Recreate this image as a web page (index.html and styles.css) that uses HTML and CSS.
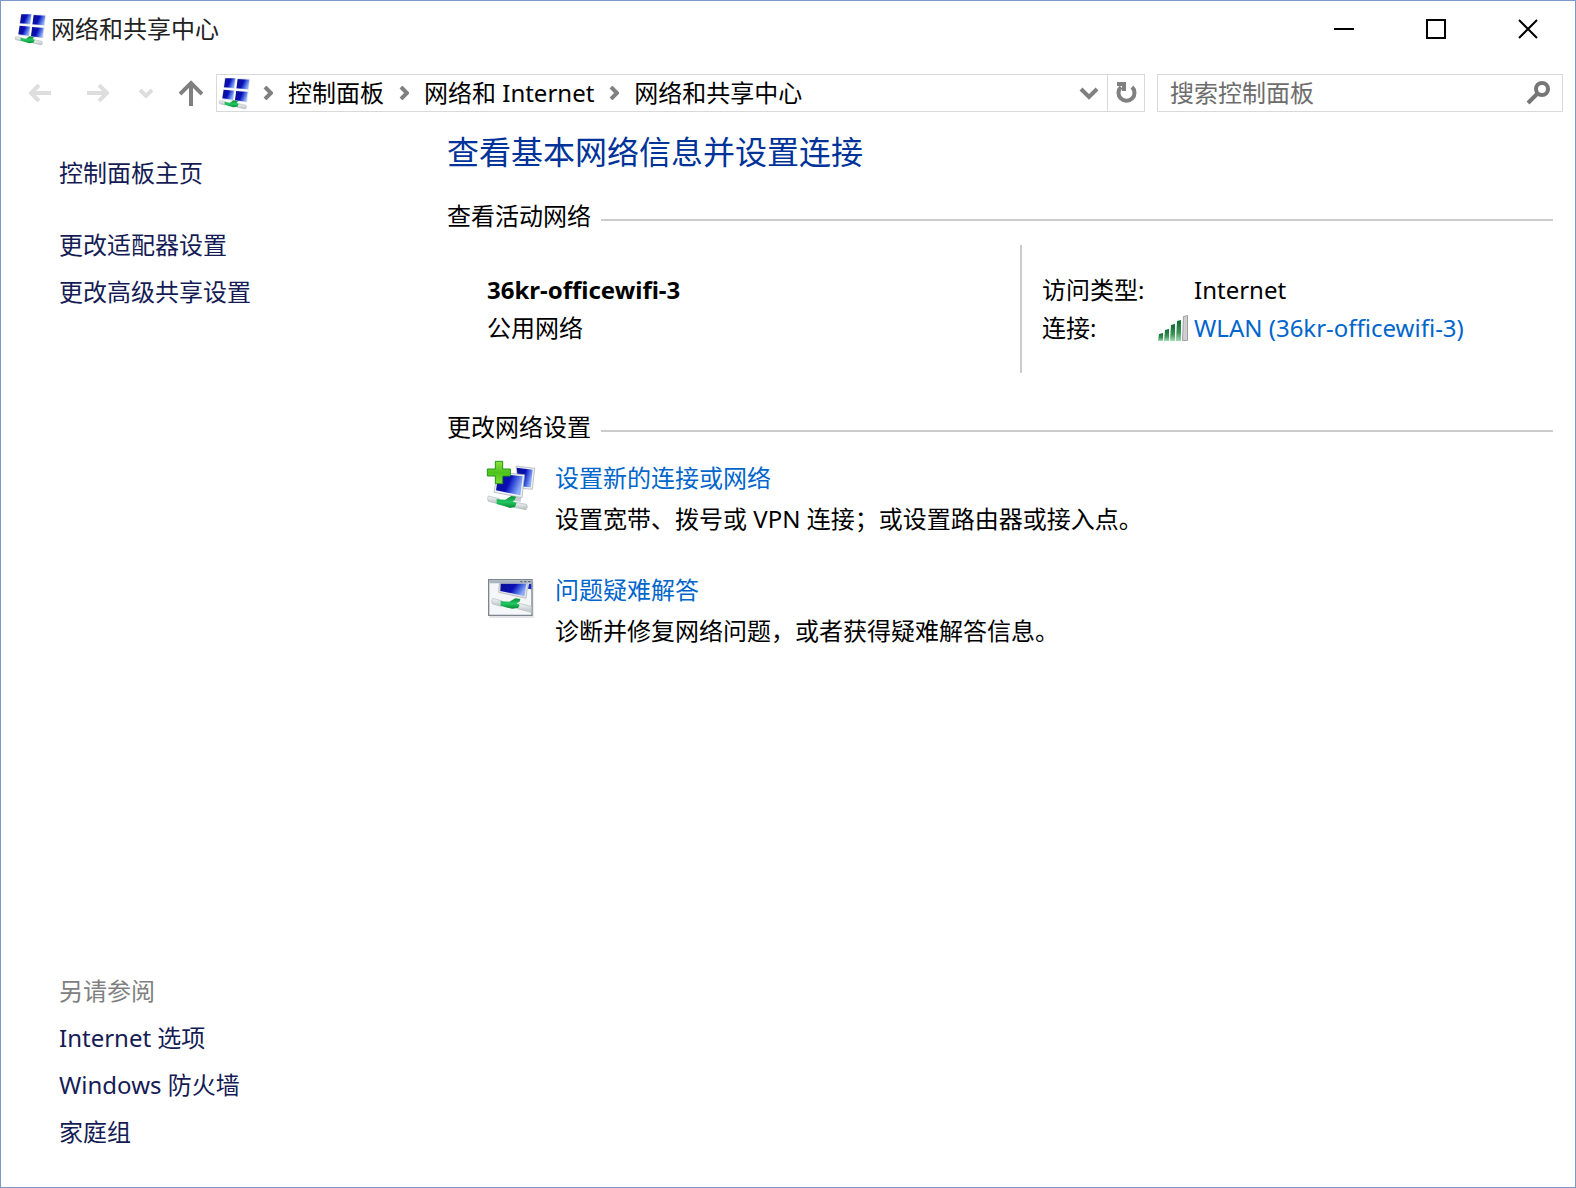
FILE: index.html
```html
<!DOCTYPE html>
<html lang="zh-CN">
<head>
    <meta charset="UTF-8">
    <meta name="viewport" content="width=device-width, initial-scale=1.0">
    <title>网络和共享中心</title>
    <link rel="stylesheet" href="styles.css">
</head>
<body>
    <!-- Shared icon shapes -->
    <svg class="sprite" aria-hidden="true">
        <defs>
            <linearGradient id="screen" x1="0" y1="0" x2="1" y2="0.35">
                <stop offset="0" stop-color="#0a1290"/>
                <stop offset="0.55" stop-color="#0a0eb4"/>
                <stop offset="0.7" stop-color="#2c46d4"/>
                <stop offset="1" stop-color="#8cacf8"/>
            </linearGradient>
            <linearGradient id="cable" x1="0" y1="0" x2="0" y2="1">
                <stop offset="0" stop-color="#f4f7f7"/>
                <stop offset="1" stop-color="#b9c1c3"/>
            </linearGradient>
            <linearGradient id="plug" x1="0" y1="0" x2="0" y2="1">
                <stop offset="0" stop-color="#0b8a34"/>
                <stop offset="0.5" stop-color="#22c860"/>
                <stop offset="1" stop-color="#078a36"/>
            </linearGradient>
            <linearGradient id="plus" x1="0" y1="0" x2="0" y2="1">
                <stop offset="0" stop-color="#8ee23c"/>
                <stop offset="0.5" stop-color="#4cc41c"/>
                <stop offset="1" stop-color="#7cdc34"/>
            </linearGradient>
            <linearGradient id="bar" x1="0" y1="0" x2="0" y2="1">
                <stop offset="0" stop-color="#0c6a30"/>
                <stop offset="0.6" stop-color="#3c9458"/>
                <stop offset="1" stop-color="#a4dcb4"/>
            </linearGradient>
            <symbol id="network" viewBox="0 0 96 99">
                <path fill="#e3e5e8" d="M19 3L96 5L88 76L12 68Z"/>
                <path fill="url(#screen)" d="M22 4L52 4L48 33L18 31Z"/>
                <path fill="url(#screen)" d="M59 6L94 8L90 37L55 34Z"/>
                <path fill="url(#screen)" d="M17 38L48 41L45 68L13 64Z"/>
                <path fill="url(#screen)" d="M54 42L89 45L85 74L51 70Z"/>
                <path fill="none" stroke="#fff" stroke-width="4" d="M56 3L48 71M15 35L92 41"/>
                <path fill="url(#cable)" stroke="#b4bcbe" stroke-width="2" d="M5 71L24 74L22 84L5 80Q1 75 5 71Z"/>
                <path fill="url(#cable)" stroke="#b4bcbe" stroke-width="2" d="M60 80L84 85Q87 91 82 96L57 90Z"/>
                <path fill="url(#plug)" d="M20 75L36 77L46 70L60 72L57 77L62 82L58 89L46 91L20 83Z"/>
            </symbol>
            <symbol id="crumb-arrow" viewBox="0 0 10 14">
                <path fill="none" stroke="#808080" stroke-width="4" d="M2 1L8 7L2 13"/>
            </symbol>
        </defs>
    </svg>

    <div class="window">
        <!-- Title bar -->
        <header class="title-bar">
            <svg class="network-icon" aria-hidden="true"><use href="#network"/></svg>
            <h1 class="window-title">网络和共享中心</h1>
            <div class="window-buttons">
                <button type="button" class="window-button" aria-label="最小化">
                    <svg width="20" height="20"><path d="M0 10H20"/></svg>
                </button>
                <button type="button" class="window-button" aria-label="最大化">
                    <svg width="20" height="20"><path d="M1 1H19V19H1Z"/></svg>
                </button>
                <button type="button" class="window-button" aria-label="关闭">
                    <svg width="20" height="20"><path d="M1 1L19 19M19 1L1 19"/></svg>
                </button>
            </div>
        </header>

        <!-- Navigation -->
        <div class="toolbar">
            <div class="history">
                <button type="button" class="nav-button faded" aria-label="后退">
                    <svg width="22" height="18"><path d="M22 9H2M10 1L2 9L10 17"/></svg>
                </button>
                <button type="button" class="nav-button faded" aria-label="前进">
                    <svg width="22" height="18"><path d="M0 9H20M12 1L20 9L12 17"/></svg>
                </button>
                <button type="button" class="nav-button recent faded" aria-label="最近的位置">
                    <svg width="14" height="10"><path d="M1 2L7 8L13 2"/></svg>
                </button>
                <button type="button" class="nav-button up" aria-label="向上">
                    <svg width="24" height="26"><path d="M12 26V3M1 14L12 3L23 14"/></svg>
                </button>
            </div>
            <div class="address">
                <svg class="network-icon" aria-hidden="true"><use href="#network"/></svg>
                <nav class="crumbs">
                    <svg class="crumb-arrow" aria-hidden="true"><use href="#crumb-arrow"/></svg>
                    <a href="#">控制面板</a>
                    <svg class="crumb-arrow" aria-hidden="true"><use href="#crumb-arrow"/></svg>
                    <a href="#">网络和 Internet</a>
                    <svg class="crumb-arrow" aria-hidden="true"><use href="#crumb-arrow"/></svg>
                    <a href="#">网络和共享中心</a>
                </nav>
                <button type="button" class="address-button" aria-label="以前的位置">
                    <svg width="20" height="14"><path d="M2 3L10 11L18 3"/></svg>
                </button>
                <button type="button" class="address-button refresh" aria-label="刷新">
                    <svg width="22" height="22"><path d="M17 5A8 8 0 1 1 6 5M2 2H9V9"/></svg>
                </button>
            </div>
            <form class="search">
                <input type="search" class="search-input" placeholder="搜索控制面板" aria-label="搜索控制面板">
                <button type="button" class="search-button" aria-label="搜索">
                    <svg width="24" height="24"><circle cx="16" cy="8" r="6"/><path d="M12 12L2 22"/></svg>
                </button>
            </form>
        </div>

        <div class="content">
            <!-- Sidebar -->
            <aside class="sidebar">
                <nav class="side-group">
                    <a href="#" class="side-home">控制面板主页</a>
                    <a href="#">更改适配器设置</a>
                    <a href="#">更改高级共享设置</a>
                </nav>
                <nav class="side-group">
                    <span class="side-label">另请参阅</span>
                    <a href="#">Internet 选项</a>
                    <a href="#">Windows 防火墙</a>
                    <a href="#">家庭组</a>
                </nav>
            </aside>

            <main class="main">
                <h2 class="page-title">查看基本网络信息并设置连接</h2>

                <section>
                    <h3 class="section-title">查看活动网络</h3>
                    <div class="active-network">
                        <div class="network-name">
                            <strong>36kr-officewifi-3</strong>
                            <p>公用网络</p>
                        </div>
                        <dl class="network-info">
                            <dt>访问类型:</dt>
                            <dd>Internet</dd>
                            <dt>连接:</dt>
                            <dd>
                                <svg class="signal" viewBox="0 0 30 26" aria-hidden="true">
                                    <g fill="url(#bar)">
                                        <path d="M1 19L5 18V26H0Z"/>
                                        <path d="M7 15L11 14V26H6Z"/>
                                        <path d="M13 10L17 9V26H12Z"/>
                                        <path d="M19 6L23 5V26H18Z"/>
                                    </g>
                                    <path stroke="#a0a0a0" fill="#cfcfcf" d="M25.500 1.500L29.500 0.500V25.500H24.500Z"/>
                                </svg>
                                <a href="#">WLAN (36kr-officewifi-3)</a>
                            </dd>
                        </dl>
                    </div>
                </section>

                <section class="settings">
                    <h3 class="section-title">更改网络设置</h3>
                    <ul class="tasks">
                        <li class="task">
                            <svg class="task-icon" viewBox="0 0 150 156" aria-hidden="true">
                                <!-- Back monitor -->
                                <path fill="#eceff1" stroke="#a5acb2" stroke-width="2" d="M90 18L146 25L139 88L98 84Z"/>
                                <path fill="url(#screen)" d="M92 23L140 29L134 82L98 79Z"/>
                                <!-- Front monitor -->
                                <path fill="#c8ccd0" d="M78 105L106 108L104 126L76 121Z"/>
                                <path fill="#eceff1" stroke="#a5acb2" stroke-width="2" d="M34 36L116 44L108 113L24 97Z"/>
                                <path fill="url(#screen)" d="M38 41L110 49L103 106L30 91Z"/>
                                <!-- Cable -->
                                <path fill="url(#cable)" stroke="#adb6b8" stroke-width="2" d="M7 108L40 116L36 131L7 124Q2 115 7 108Z"/>
                                <path fill="url(#cable)" stroke="#adb6b8" stroke-width="2" d="M84 126L122 133Q127 142 120 149L80 141Z"/>
                                <path fill="url(#plug)" d="M32 118L58 119L76 108L90 110L87 119L80 124L92 129L87 141L72 144L56 139L32 132Z"/>
                                <!-- Plus -->
                                <path fill="url(#plus)" stroke="#26941a" stroke-width="3" d="M28 4H50V27H73V48H50V71H28V48H4V27H28Z"/>
                            </svg>
                            <div>
                                <a href="#">设置新的连接或网络</a>
                                <p>设置宽带、拨号或 VPN 连接；或设置路由器或接入点。</p>
                            </div>
                        </li>
                        <li class="task">
                            <svg class="task-icon" viewBox="0 0 150 156" aria-hidden="true">
                                <path fill="#e2e4e8" d="M10 27H143V138H10Z"/>
                                <path fill="#f4f6f7" stroke="#7c858e" stroke-width="4" d="M8 23H138V130H8Z"/>
                                <path fill="#a9b4c0" d="M10 25H136V34H10Z"/>
                                <path stroke="#47525e" stroke-width="3" d="M103 29H109M115 29H121M127 29H133"/>
                                <path fill="#dfe2e5" stroke="#a9afb5" stroke-width="2" d="M40 35H126L120 79L38 61Z"/>
                                <path fill="url(#screen)" d="M44 35H121L115 72L43 57Z"/>
                                <path fill="#1626b8" d="M129 35H136V52L126 50Z"/>
                                <path fill="url(#cable)" stroke="#b3bcbe" stroke-width="2" d="M20 79L49 87L46 103L20 96Q14 87 20 79Z"/>
                                <path fill="url(#cable)" stroke="#b3bcbe" stroke-width="2" d="M98 94L136 103V121L94 110Z"/>
                                <path fill="url(#plug)" d="M44 88L70 89L88 79L103 81L101 89L92 94L101 99L96 108L78 110L64 107L44 101Z"/>
                            </svg>
                            <div>
                                <a href="#">问题疑难解答</a>
                                <p>诊断并修复网络问题，或者获得疑难解答信息。</p>
                            </div>
                        </li>
                    </ul>
                </section>
            </main>
        </div>
    </div>
</body>
</html>
```
FILE: styles.css
```css
* {
    margin: 0;
    padding: 0;
    box-sizing: border-box;
}

body {
    font-family: "Noto Sans", "Noto Sans CJK SC", sans-serif;
    font-size: 24px;
    line-height: 32px;
    color: #000;
    background: #fff;
}

a {
    color: #0066cc;
    text-decoration: none;
}

a:hover {
    text-decoration: underline;
}

button {
    display: flex;
    align-items: center;
    justify-content: center;
    border: none;
    background: none;
}

svg {
    display: block;
    flex-shrink: 0;
}

.sprite {
    position: absolute;
    width: 0;
    height: 0;
}

.window {
    display: flex;
    flex-direction: column;
    min-height: 100vh;
    border: 1px solid #7a98c8;
}

.network-icon {
    width: 32px;
    height: 33px;
}

/* Title bar */
.title-bar {
    display: flex;
    align-items: center;
    gap: 5px;
    height: 56px;
    padding-left: 13px;
}

.window-title {
    flex: 1;
    font-size: 24px;
    font-weight: normal;
    color: #222;
}

.window-buttons {
    display: flex;
    padding-right: 1px;
}

.window-button {
    width: 92px;
    height: 56px;
}

.window-button svg {
    fill: none;
    stroke: #000;
    stroke-width: 2;
}

.window-button:hover {
    background: #e5e5e5;
}

/* Toolbar */
.toolbar {
    display: flex;
    padding: 17px 12px 0 10px;
}

.history {
    display: flex;
    align-items: center;
}

.nav-button {
    width: 58px;
    height: 36px;
}

.nav-button.recent {
    width: 38px;
}

.nav-button.up {
    width: 51px;
}

.nav-button svg {
    fill: none;
    stroke: #808080;
    stroke-width: 4;
}

.nav-button.faded svg {
    stroke: #dedede;
}

.address {
    display: flex;
    flex: 1;
    align-items: center;
    height: 38px;
    margin-right: 12px;
    padding-left: 1px;
    border: 1px solid #d9d9d9;
}

.crumbs {
    display: flex;
    flex: 1;
    align-items: center;
    gap: 15px;
    padding-left: 13px;
    white-space: nowrap;
}

.crumbs a {
    color: #000;
}

.crumb-arrow {
    width: 10px;
    height: 14px;
}

.address-button {
    width: 36px;
    height: 36px;
}

.address-button svg {
    fill: none;
    stroke: #808080;
    stroke-width: 4;
}

.address-button.refresh {
    width: 37px;
    border-left: 1px solid #d9d9d9;
}

.search {
    display: flex;
    flex: 0 0 406px;
    min-width: 0;
    height: 38px;
    border: 1px solid #d9d9d9;
}

.search-input {
    flex: 1;
    min-width: 0;
    padding-left: 12px;
    font: inherit;
    border: none;
    outline: none;
    background: none;
}

.search-input::placeholder {
    color: #6d6d6d;
}

.search-button {
    width: 48px;
}

.search-button svg {
    fill: none;
    stroke: #767676;
    stroke-width: 4;
}

/* Content */
.content {
    display: flex;
    flex: 1;
}

.sidebar {
    display: flex;
    flex-direction: column;
    justify-content: space-between;
    width: 446px;
    padding: 37px 20px 32px 58px;
    line-height: 47px;
}

.side-group {
    display: flex;
    flex-direction: column;
    align-items: flex-start;
}

.side-group a {
    color: #151c55;
}

.side-home {
    margin-bottom: 25px;
}

.side-label {
    color: #808080;
}

.main {
    flex: 1;
    padding: 16px 22px 0 0;
}

.page-title {
    margin-bottom: 24px;
    font-size: 32px;
    font-weight: normal;
    line-height: 48px;
    color: #003399;
}

.section-title {
    display: flex;
    align-items: center;
    gap: 10px;
    font-size: 24px;
    font-weight: normal;
}

.section-title::after {
    content: "";
    flex: 1;
    height: 2px;
    margin-top: 8px;
    background: #ccc;
}

.active-network {
    display: grid;
    grid-template-columns: 573fr 533fr;
    margin-top: 13px;
    line-height: 38px;
}

.network-name {
    padding: 26px 0 26px 40px;
}

.network-info {
    display: grid;
    grid-template-columns: 152px 1fr;
    align-content: start;
    padding: 26px 0 26px 20px;
    border-left: 2px solid #ccc;
}

.network-info dd {
    display: flex;
    align-items: center;
    white-space: nowrap;
}

/* The signal bars hang left of the value column */
.signal {
    width: 30px;
    height: 26px;
    margin: 0 6px 0 -36px;
}

.settings {
    margin-top: 38px;
}

.tasks {
    display: flex;
    flex-direction: column;
    gap: 30px;
    margin-top: 14px;
    padding-left: 39px;
    list-style: none;
    line-height: 41px;
}

.task {
    display: flex;
    gap: 19px;
}

.task-icon {
    width: 50px;
    height: 52px;
    margin-top: 3px;
}
```
